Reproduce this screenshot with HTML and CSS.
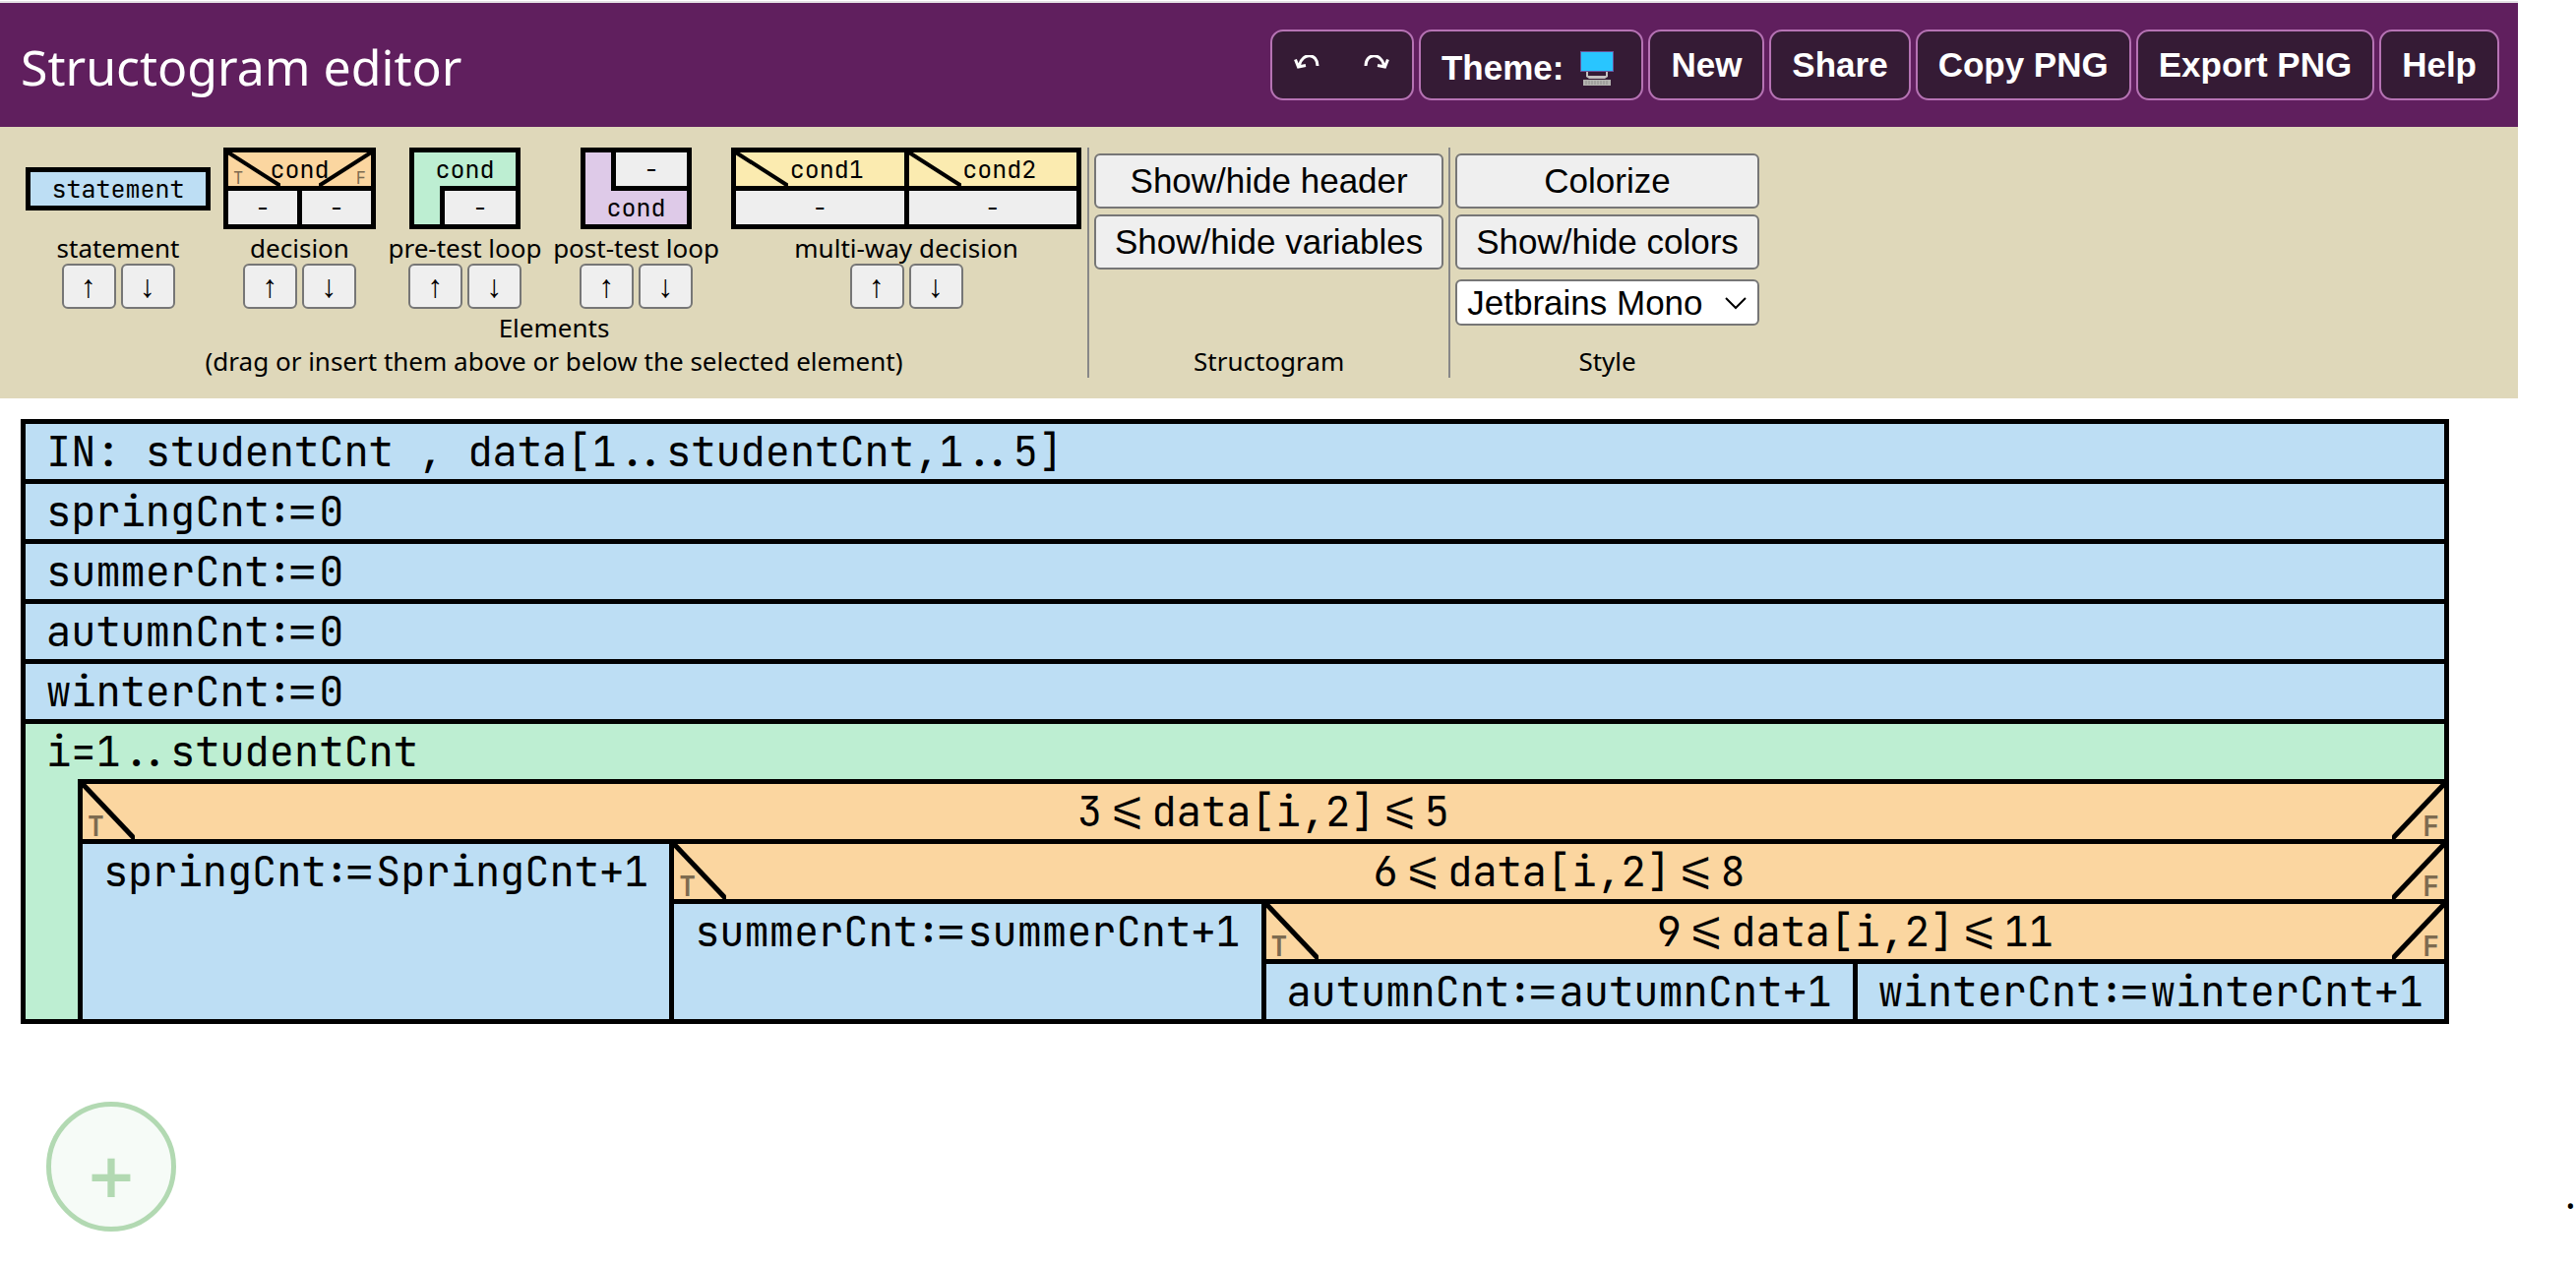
FILE: index.html
```html
<!DOCTYPE html>
<html lang="en">
<head>
<meta charset="utf-8">
<title>Structogram editor</title>
<link rel="stylesheet" href="styles.css">
</head>
<body>
<header class="topbar">
  <h1 class="title">Structogram editor</h1>
  <nav class="actions">
    <div class="history">
      <button class="history-btn" type="button" aria-label="Undo"><svg width="26" height="14" viewBox="0 0 26 14"><path d="M24 11C24 -2 9 -3 5.500 10M1.500 4.500L4.500 12L12 10.500" fill="none" stroke="currentColor" stroke-width="3"/></svg></button>
      <button class="history-btn" type="button" aria-label="Redo"><svg width="26" height="14" viewBox="0 0 26 14"><path d="M2 11C2 -2 17 -3 20.500 10M24.500 4.500L21.500 12L14 10.500" fill="none" stroke="currentColor" stroke-width="3"/></svg></button>
    </div>
    <button class="action theme" type="button">Theme:
      <svg width="34" height="35" viewBox="0 0 34 35"><path d="M0 0H34V21H0Z" fill="#6a559c"/><path d="M1 1H33V20H1Z" fill="#29c5ff"/><path d="M6 21H8V25H26V21H28V26L25 28H9L6 26Z" fill="#c4c0c0"/><path d="M3 29H31V35H3Z" fill="#b4b4b0"/><path d="M5 31H29M5 33H29" stroke="#8f8f8c" stroke-dasharray="2 1"/></svg></button>
    <button class="action" type="button">New</button>
    <button class="action" type="button">Share</button>
    <button class="action" type="button">Copy PNG</button>
    <button class="action" type="button">Export PNG</button>
    <button class="action" type="button">Help</button>
  </nav>
</header>

<section class="toolbar">
  <div class="group elements">
    <div class="palette">
      <div class="item">
        <div class="sample"><div class="box stmt mini-stmt">statement</div></div>
        <span class="name">statement</span>
        <div class="arrows"><button type="button">↑</button><button type="button">↓</button></div>
      </div>
      <div class="item">
        <div class="sample"><div class="box mini mini-if">
          <div class="cond if-cond"><svg class="slash slash-l" viewBox="0 0 100 100" preserveAspectRatio="none"><path d="M0 0L100 100"/></svg><svg class="slash slash-r" viewBox="0 0 100 100" preserveAspectRatio="none"><path d="M100 0L0 100"/></svg><small class="mark mark-t">T</small>cond<small class="mark mark-f">F</small></div>
          <div class="cols"><div class="empty">-</div><div class="empty">-</div></div>
        </div></div>
        <span class="name">decision</span>
        <div class="arrows"><button type="button">↑</button><button type="button">↓</button></div>
      </div>
      <div class="item">
        <div class="sample"><div class="box mini mini-loop pre">
          <div class="cond">cond</div>
          <div class="loop-body pre-body"><div class="empty">-</div></div>
        </div></div>
        <span class="name">pre-test loop</span>
        <div class="arrows"><button type="button">↑</button><button type="button">↓</button></div>
      </div>
      <div class="item">
        <div class="sample"><div class="box mini mini-loop post">
          <div class="loop-body post-body"><div class="empty">-</div></div>
          <div class="cond">cond</div>
        </div></div>
        <span class="name">post-test loop</span>
        <div class="arrows"><button type="button">↑</button><button type="button">↓</button></div>
      </div>
      <div class="item">
        <div class="sample"><div class="box mini mini-multi">
          <div class="cols">
            <div class="case"><svg class="slash slash-l" viewBox="0 0 100 100" preserveAspectRatio="none"><path d="M0 0L100 100"/></svg>cond1</div>
            <div class="case"><svg class="slash slash-l" viewBox="0 0 100 100" preserveAspectRatio="none"><path d="M0 0L100 100"/></svg>cond2</div>
          </div>
          <div class="cols"><div class="empty">-</div><div class="empty">-</div></div>
        </div></div>
        <span class="name">multi-way decision</span>
        <div class="arrows"><button type="button">↑</button><button type="button">↓</button></div>
      </div>
    </div>
    <p class="caption">Elements<br>(drag or insert them above or below the selected element)</p>
  </div>
  <div class="group">
    <div class="controls">
      <button class="tool" type="button">Show/hide header</button>
      <button class="tool" type="button">Show/hide variables</button>
    </div>
    <p class="caption">Structogram</p>
  </div>
  <div class="group">
    <div class="controls">
      <button class="tool" type="button">Colorize</button>
      <button class="tool" type="button">Show/hide colors</button>
      <div class="picker">
        <select class="font-select" aria-label="Font"><option>Jetbrains Mono</option></select>
        <svg class="chevron" width="24" height="14" viewBox="0 0 24 14"><path d="M2 2L12 12L22 2" fill="none" stroke="#000" stroke-width="2"/></svg>
      </div>
    </div>
    <p class="caption">Style</p>
  </div>
</section>

<main class="diagram box">
  <div class="row stmt">IN: studentCnt , data[1..studentCnt,1..5]</div>
  <div class="row stmt">springCnt:=0</div>
  <div class="row stmt">summerCnt:=0</div>
  <div class="row stmt">autumnCnt:=0</div>
  <div class="row stmt">winterCnt:=0</div>
  <div class="loop">
    <div class="row-text">i=1..studentCnt</div>
    <div class="loop-inner">
      <div class="decision">
        <div class="test"><svg class="slash slash-l" viewBox="0 0 100 100" preserveAspectRatio="none"><path d="M0 0L100 100"/></svg><svg class="slash slash-r" viewBox="0 0 100 100" preserveAspectRatio="none"><path d="M100 0L0 100"/></svg><small class="mark mark-t">T</small>3&lt;=data[i,2]&lt;=5<small class="mark mark-f">F</small></div>
        <div class="branches split-4">
          <div class="stmt leaf">springCnt:=SpringCnt+1</div>
          <div class="decision rest">
            <div class="test"><svg class="slash slash-l" viewBox="0 0 100 100" preserveAspectRatio="none"><path d="M0 0L100 100"/></svg><svg class="slash slash-r" viewBox="0 0 100 100" preserveAspectRatio="none"><path d="M100 0L0 100"/></svg><small class="mark mark-t">T</small>6&lt;=data[i,2]&lt;=8<small class="mark mark-f">F</small></div>
            <div class="branches split-3">
              <div class="stmt leaf">summerCnt:=summerCnt+1</div>
              <div class="decision rest">
                <div class="test"><svg class="slash slash-l" viewBox="0 0 100 100" preserveAspectRatio="none"><path d="M0 0L100 100"/></svg><svg class="slash slash-r" viewBox="0 0 100 100" preserveAspectRatio="none"><path d="M100 0L0 100"/></svg><small class="mark mark-t">T</small>9&lt;=data[i,2]&lt;=11<small class="mark mark-f">F</small></div>
                <div class="branches split-2">
                  <div class="stmt leaf">autumnCnt:=autumnCnt+1</div>
                  <div class="stmt leaf">winterCnt:=winterCnt+1</div>
                </div>
              </div>
            </div>
          </div>
        </div>
      </div>
    </div>
  </div>
</main>

<footer class="bottom">
  <button class="add" type="button">+</button>
  <span class="dot">.</span>
</footer>
</body>
</html>
```

FILE: styles.css
```css
:root {
  --ui: "Noto Sans", sans-serif;
  --control: "Liberation Sans", Arial, sans-serif;
  --mono: "JetBrains Mono", "DejaVu Sans Mono", monospace;
  --page-end: 59px;
}

* { box-sizing: border-box; }

body {
  margin: 0;
  padding-top: 1px;
  background: #fff;
  color: #000;
  font-family: var(--ui);
  font-size: 26px;
}

button { cursor: pointer; }

/* Header */
.topbar {
  display: flex;
  align-items: center;
  justify-content: space-between;
  height: 128px;
  margin-right: var(--page-end);
  padding: 0 19px 0 21px;
  border-top: 2px solid #e4e0e4;
  background: #601f5e;
  color: #fff;
}

.title {
  margin: 0;
  padding-top: 3px;
  font-size: 50px;
  font-weight: 400;
}

.actions {
  display: flex;
  gap: 5px;
}

.action,
.history {
  height: 72px;
  border: 2px solid #b673b4;
  border-radius: 13px;
  background: #351b35;
  color: #fff;
}

.action {
  display: flex;
  align-items: center;
  padding: 0 21px;
  font: bold 35px var(--control);
  white-space: nowrap;
}

.theme {
  gap: 17px;
  padding: 6px 28px 0 21px;
}

.history {
  display: flex;
}

.history-btn {
  display: flex;
  align-items: center;
  justify-content: center;
  width: 71px;
  padding: 0 0 6px;
  border: 0;
  background: none;
  color: inherit;
}

/* Toolbar */
.toolbar {
  display: flex;
  margin-right: var(--page-end);
  padding: 21px;
  background: #dfd8ba;
}

.group {
  display: flex;
  flex-direction: column;
  justify-content: space-between;
  padding: 0 5px;
}

.group + .group { border-left: 2px solid #888; }

.palette {
  display: grid;
  grid-template-columns: 188px 155px 155px 167px 356px;
  gap: 13px;
  padding-right: 1px;
}

.item {
  display: flex;
  flex-direction: column;
  align-items: center;
}

.sample {
  display: flex;
  align-items: center;
  height: 83px;
  margin-bottom: 3px;
  font: 25px/34px var(--mono);
  text-align: center;
}

.name {
  line-height: 32px;
  white-space: nowrap;
}

.arrows {
  display: flex;
  gap: 5px;
}

.arrows button {
  width: 55px;
  height: 46px;
  padding: 0;
  border: 2px solid #767676;
  border-radius: 6px;
  background: #efefef;
  font: 32px "Liberation Sans", sans-serif;
}

.caption {
  margin: 0;
  padding-top: 2px;
  line-height: 34px;
  text-align: center;
}

.controls {
  display: flex;
  flex-direction: column;
  gap: 6px;
  padding-top: 6px;
}

.tool {
  height: 56px;
  padding: 0 19px;
  border: 2px solid #767676;
  border-radius: 6px;
  background: #efefef;
  font: 35px var(--control);
  white-space: nowrap;
}

.picker {
  display: grid;
  align-items: center;
  margin-top: 4px;
}

.font-select,
.chevron { grid-area: 1 / 1; }

.chevron {
  justify-self: end;
  margin-right: 12px;
  pointer-events: none;
}

.font-select {
  appearance: none;
  width: 100%;
  height: 47px;
  padding: 0 10px;
  border: 2px solid #767676;
  border-radius: 6px;
  background: #fff;
  color: #000;
  font: 35px var(--control);
}

/* Structogram blocks */
.box { border: 5px solid #000; }
.stmt { background: #bddef4; }
.empty { background: #eee; }

.mini-stmt { width: 188px; }
.mini-if { width: 155px; }
.mini-loop { width: 113px; }
.mini-multi { width: 356px; }

.mini {
  background: #000;
  display: grid;
  gap: 5px;
}

.mini .cols {
  display: grid;
  grid-template-columns: 1fr 1fr;
  gap: 5px;
}

.if-cond,
.case,
.test {
  position: relative;
}

.if-cond { background: #fbd6a0; }
.case { background: #fbebb0; padding-left: 14px; }

.pre { background: #bdeed2; gap: 0; }
.post { background: #decae8; gap: 0; }
.loop-body { margin-left: 26px; border-left: 5px solid #000; }
.pre-body { border-top: 5px solid #000; }
.post-body { border-bottom: 5px solid #000; }

.slash {
  position: absolute;
  top: 0;
  width: 53px;
  height: 100%;
  fill: none;
  stroke: #000;
}

.slash path {
  stroke-width: 5px;
  vector-effect: non-scaling-stroke;
}

.mini .slash path { stroke-width: 4px; }

.slash-l { left: 0; }
.slash-r { right: 0; }

.mark {
  position: absolute;
  bottom: 0;
  color: #7d6b50;
  font-size: 28px;
  font-weight: 600;
  line-height: 26px;
}

.mark-t { left: 5px; }
.mark-f { right: 5px; }

.if-cond .mark {
  font-size: 17px;
  font-weight: 400;
  line-height: 15px;
}

/* Main diagram */
.diagram {
  margin: 21px 129px 0 21px;
  font: 42px/56px var(--mono);
  white-space: nowrap;
}

.row {
  padding: 0 21px;
  border-bottom: 5px solid #000;
}

.row-text { padding: 0 21px; }
.loop { background: #bdeed2; }

.loop-inner {
  margin-left: 53px;
  border-top: 5px solid #000;
  border-left: 5px solid #000;
}

.decision {
  display: flex;
  flex-direction: column;
}

.test {
  background: #fbd6a0;
  border-bottom: 5px solid #000;
  text-align: center;
}

.branches {
  display: grid;
  flex: 1;
  gap: 5px;
  background: #000;
}

.split-4 { grid-template-columns: repeat(4, minmax(0, 1fr)); }
.split-3 { grid-template-columns: repeat(3, minmax(0, 1fr)); }
.split-2 { grid-template-columns: repeat(2, minmax(0, 1fr)); }

.rest { grid-column: 2 / -1; }

.leaf { text-align: center; }

/* Footer */
.bottom {
  display: flex;
  align-items: flex-start;
  justify-content: space-between;
  padding: 79px 0 20px 47px;
}

.add {
  width: 132px;
  height: 132px;
  padding: 20px 0 0;
  border: 5px solid #b2d9b2;
  border-radius: 50%;
  background: #f6fbf7;
  color: #b2d9b2;
  font: bold 62px/1 "DejaVu Sans", sans-serif;
}

.dot {
  padding-top: 64px;
  font-size: 42px;
}
```
